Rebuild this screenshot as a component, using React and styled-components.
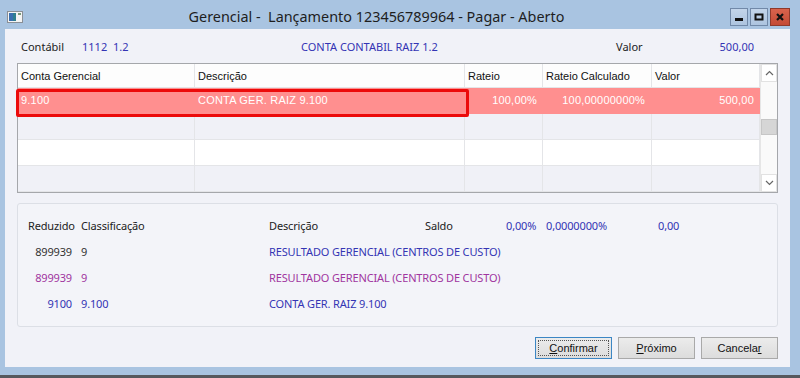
import React from "react";
import styled, { createGlobalStyle } from "styled-components";

const Global = createGlobalStyle`
  html, body { margin: 0; padding: 0; background: #a9c4e1; }
  * { box-sizing: border-box; }
`;

const Window = styled.div`
  width: 800px;
  height: 378px;
  background: #a9c4e1;
  border-bottom: 3px solid #56595e;
  display: flex;
  flex-direction: column;
  font-family: "Noto Sans", "Open Sans", sans-serif;
`;

const TitleBar = styled.div`
  height: 29px;
  display: flex;
  align-items: flex-start;
  padding: 0 10px 0 7px;
`;

const AppIcon = styled.svg`
  margin-top: 11px;
  flex: none;
`;

const Title = styled.div`
  flex: 1;
  text-align: center;
  font-size: 14.4px;
  line-height: 18px;
  margin-top: 8px;
  color: #1e1e1e;
  white-space: pre;
`;

const Controls = styled.div`
  display: flex;
  gap: 2px;
  margin-top: 8px;
`;

const CtrlBtn = styled.div`
  width: ${(p) => (p.$close ? 20 : 18)}px;
  height: 18px;
  border: 1px solid ${(p) => (p.$close ? "#8f3a2c" : "#7189a8")};
  background: ${(p) =>
    p.$close ? "linear-gradient(#d8634d, #c44a35)" : "linear-gradient(#c3d5ea, #adc4df)"};
  display: flex;
  align-items: center;
  justify-content: center;
`;

const Client = styled.div`
  flex: 1;
  margin: 0 10px 8px 5px;
  background: #f1f2f8;
  display: flex;
  flex-direction: column;
  padding-top: 10px;
`;

const InfoRow = styled.div`
  display: grid;
  grid-template-columns: 61px 219px 315px 1fr auto;
  height: 16px;
  line-height: 16px;
  font-size: 11px;
  padding: 0 36px 0 16px;
  white-space: pre;
`;

const Label = styled.span`
  color: #222;
`;

const Blue = styled.span`
  color: ${(p) => p.$c || "#3434b4"};
  text-align: ${(p) => p.$align || "left"};
`;

const GridBox = styled.div`
  position: relative;
  margin: 8px 12px 0;
  height: 130px;
  border: 1px solid #a5a7ab;
  background: #fff;
  display: flex;
`;

const Table = styled.div`
  display: grid;
  grid-template-columns: 177px 270px 78px 109px 108px;
  grid-auto-rows: 26px;
  grid-template-rows: 24px;
  font-family: "Liberation Sans", Arial, sans-serif;
  font-size: 11px;
`;

const HeadCell = styled.div`
  background: #fdfdfd;
  border-right: 1px solid #e4e5e8;
  border-bottom: 1px solid #e4e5e8;
  padding: 0 3px;
  line-height: 24px;
  color: #111;
  white-space: nowrap;
`;

const Cell = styled.div`
  background: ${(p) => (p.$sel ? "#ff8f8f" : p.$alt ? "#f0f1f7" : "#ffffff")};
  color: ${(p) => (p.$sel ? "#ffffff" : "#111")};
  border-right: 1px solid ${(p) => (p.$sel ? "#ff8f8f" : "#e4e5e8")};
  border-bottom: 1px solid ${(p) => (p.$sel ? "#ff8f8f" : "#e4e5e8")};
  text-align: ${(p) => (p.$right ? "right" : "left")};
  padding: ${(p) => (p.$right ? `0 ${p.$pr || 5}px 0 3px` : "0 3px")};
  line-height: 25px;
  white-space: nowrap;
  letter-spacing: 0.2px;
`;

const Selection = styled.div`
  position: absolute;
  left: -2px;
  top: 25px;
  width: 453px;
  height: 28px;
  border: 3px solid #ec0b0b;
  border-radius: 2px;
  pointer-events: none;
`;

const Scrollbar = styled.div`
  width: 17px;
  border-left: 1px solid #e6e6e6;
  background: #fafafa;
  display: flex;
  flex-direction: column;
`;

const ArrowBtn = styled.div`
  height: 18px;
  border: 1px solid #e2e2e2;
  background: #fff;
  display: flex;
  align-items: center;
  justify-content: center;
`;

const Track = styled.div`
  flex: 1;
  display: flex;
  flex-direction: column;
  padding-top: 37px;
`;

const Thumb = styled.div`
  height: 16px;
  background: #d6d6d6;
  border: 1px solid #c6c6c6;
`;

const Panel = styled.div`
  margin: 10px 12px 0;
  height: 124px;
  border: 1px solid #dcdfe6;
  border-radius: 3px;
  background: #f3f4f9;
  padding: 8px 0 0 10px;
  display: grid;
  grid-template-columns: 53px 188px 156px 81px 40px 112px 1fr;
  grid-auto-rows: 26px;
  font-size: 11px;
  align-items: center;
  letter-spacing: -0.15px;
`;

const PCell = styled.span`
  color: ${(p) => p.$c || "#222"};
  text-align: ${(p) => (p.$right ? "right" : "left")};
  padding-right: ${(p) => (p.$right ? "9px" : "0")};
  white-space: nowrap;
`;

const ButtonRow = styled.div`
  display: flex;
  justify-content: flex-end;
  gap: 6px;
  padding-right: 12px;
  margin-top: 10px;
`;

const Button = styled.button`
  width: 77px;
  height: 22px;
  font-family: "Liberation Sans", Arial, sans-serif;
  font-size: 11px;
  color: #111;
  background: linear-gradient(#ececec, #dcdcdc);
  border: 1px solid ${(p) => (p.$default ? "#3c86c4" : "#a9a9a9")};
  padding: 0;
  position: relative;
  outline: ${(p) => (p.$default ? "1px dotted #555" : "none")};
  outline-offset: -4px;
`;

const ColDefs = [
  { h: "Conta Gerencial" },
  { h: "Descrição" },
  { h: "Rateio" },
  { h: "Rateio Calculado" },
  { h: "Valor" },
];

const rows = [
  ["9.100", "CONTA GER. RAIZ 9.100", "100,00%", "100,00000000%", "500,00"],
  ["", "", "", "", ""],
  ["", "", "", "", ""],
  ["", "", "", "", ""],
];

const rightPad = [5, 5, 5, 6, 5];

function Chevron({ up }) {
  return (
    <svg width="9" height="6" viewBox="0 0 9 6">
      <path
        d={up ? "M1 5 L4.5 1.5 L8 5" : "M1 1 L4.5 4.5 L8 1"}
        fill="none"
        stroke="#666"
        strokeWidth="1.2"
      />
    </svg>
  );
}

export default function App() {
  return (
    <>
      <Global />
      <Window>
        <TitleBar>
          <AppIcon width="16" height="12" viewBox="0 0 16 12">
            <rect x="0.5" y="0.5" width="15" height="11" fill="#f4f4f4" stroke="#8a8f96" />
            <rect x="2" y="2" width="7" height="8" fill="#2f7f8f" />
            <rect x="2" y="2" width="4" height="8" fill="#3a6fb0" />
            <rect x="11" y="2" width="3" height="2" fill="#7a9a7a" />
          </AppIcon>
          <Title>{"Gerencial -  Lançamento 123456789964 - Pagar - Aberto"}</Title>
          <Controls>
            <CtrlBtn>
              <svg width="10" height="10" viewBox="0 0 10 10">
                <rect x="1" y="6" width="8" height="3" fill="#111" />
              </svg>
            </CtrlBtn>
            <CtrlBtn>
              <svg width="10" height="10" viewBox="0 0 10 10">
                <rect x="1.5" y="2.5" width="7" height="5" fill="none" stroke="#111" strokeWidth="2" />
              </svg>
            </CtrlBtn>
            <CtrlBtn $close>
              <svg width="10" height="10" viewBox="0 0 10 10">
                <path d="M2 2 L8 8 M8 2 L2 8" stroke="#111" strokeWidth="2.2" />
              </svg>
            </CtrlBtn>
          </Controls>
        </TitleBar>
        <Client>
          <InfoRow>
            <Label>Contábil</Label>
            <Blue>{"1112  1.2"}</Blue>
            <Blue>CONTA CONTABIL RAIZ 1.2</Blue>
            <Label>Valor</Label>
            <Blue $align="right">500,00</Blue>
          </InfoRow>

          <GridBox>
            <Table>
              {ColDefs.map((c) => (
                <HeadCell key={c.h}>{c.h}</HeadCell>
              ))}
              {rows.map((r, i) =>
                r.map((v, j) => (
                  <Cell
                    key={`${i}-${j}`}
                    $sel={i === 0}
                    $alt={i % 2 === 1}
                    $right={j >= 2}
                    $pr={rightPad[j]}
                  >
                    {v}
                  </Cell>
                ))
              )}
            </Table>
            <Scrollbar>
              <ArrowBtn>
                <Chevron up />
              </ArrowBtn>
              <Track>
                <Thumb />
              </Track>
              <ArrowBtn>
                <Chevron />
              </ArrowBtn>
            </Scrollbar>
            <Selection />
          </GridBox>

          <Panel>
            <PCell>Reduzido</PCell>
            <PCell>Classificação</PCell>
            <PCell>Descrição</PCell>
            <PCell>Saldo</PCell>
            <PCell $c="#3434b4">0,00%</PCell>
            <PCell $c="#3434b4">0,0000000%</PCell>
            <PCell $c="#3434b4">0,00</PCell>

            <PCell $right $c="#333">899939</PCell>
            <PCell $c="#333">9</PCell>
            <PCell $c="#3434b4" style={{ gridColumn: "3 / span 5" }}>
              RESULTADO GERENCIAL (CENTROS DE CUSTO)
            </PCell>

            <PCell $right $c="#a0359f">899939</PCell>
            <PCell $c="#a0359f">9</PCell>
            <PCell $c="#a0359f" style={{ gridColumn: "3 / span 5" }}>
              RESULTADO GERENCIAL (CENTROS DE CUSTO)
            </PCell>

            <PCell $right $c="#3434b4">9100</PCell>
            <PCell $c="#3434b4">9.100</PCell>
            <PCell $c="#3434b4" style={{ gridColumn: "3 / span 5" }}>
              CONTA GER. RAIZ 9.100
            </PCell>
          </Panel>

          <ButtonRow>
            <Button $default>
              <u>C</u>onfirmar
            </Button>
            <Button>
              <u>P</u>róximo
            </Button>
            <Button>
              Cancela<u>r</u>
            </Button>
          </ButtonRow>
        </Client>
      </Window>
    </>
  );
}
